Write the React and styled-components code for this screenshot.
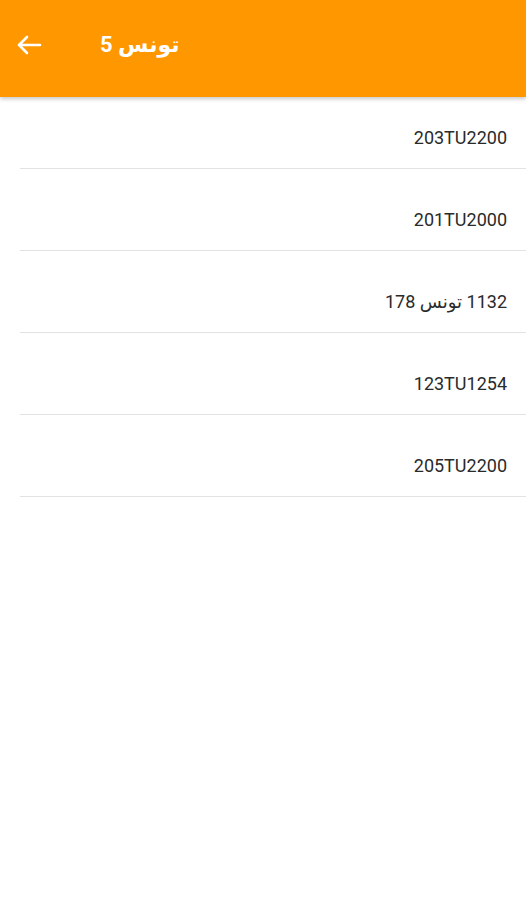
import React from "react";
import styled, { createGlobalStyle } from "styled-components";

const GlobalStyle = createGlobalStyle`
  html, body {
    margin: 0;
    padding: 0;
    background: #ffffff;
  }
  body {
    font-family: Roboto, "DejaVu Sans", sans-serif;
  }
`;

const items = ["203TU2200", "201TU2000", "1132 تونس 178", "123TU1254", "205TU2200"];

const App = () => {
  return (
    <Page>
      <GlobalStyle />
      <Toolbar>
        <BackButton aria-label="back">
          <svg width="26" height="20" viewBox="0 0 26 20" fill="none">
            <path
              d="M24 10H3M11 2L3 10l8 8"
              stroke="#ffffff"
              strokeWidth="2.6"
              strokeLinecap="round"
              strokeLinejoin="round"
            />
          </svg>
        </BackButton>
        <Title>5 تونس</Title>
      </Toolbar>
      <List dir="rtl">
        {items.map((item) => (
          <Row key={item}>{item}</Row>
        ))}
      </List>
    </Page>
  );
};

export default App;

const Page = styled.div`
  min-height: 900px;
  background: #ffffff;
`;

const Toolbar = styled.header`
  height: 97px;
  box-sizing: border-box;
  padding-bottom: 7px;
  background-color: #ff9800;
  display: flex;
  align-items: center;
  box-shadow: 0 2px 4px rgba(0, 0, 0, 0.22);
  position: relative;
  z-index: 1;
`;

const BackButton = styled.button`
  width: 26px;
  height: 26px;
  margin-left: 16px;
  padding: 0;
  border: none;
  background: transparent;
  display: flex;
  align-items: center;
  justify-content: center;
`;

const Title = styled.h1`
  margin: 0 0 0 58px;
  color: #ffffff;
  font-size: 22px;
  font-weight: 700;
  line-height: 26px;
  font-family: Roboto, "DejaVu Sans", sans-serif;
`;

const List = styled.ul`
  list-style: none;
  margin: 0;
  padding: 0;
`;

const Row = styled.li`
  margin-left: 20px;
  padding: 40px 19px 19px 0;
  line-height: 22px;
  font-size: 18px;
  color: #2a2a2a;
  text-align: right;
  border-bottom: 1px solid #e2e2e2;

  &:first-child {
    padding-top: 30px;
  }
`;
